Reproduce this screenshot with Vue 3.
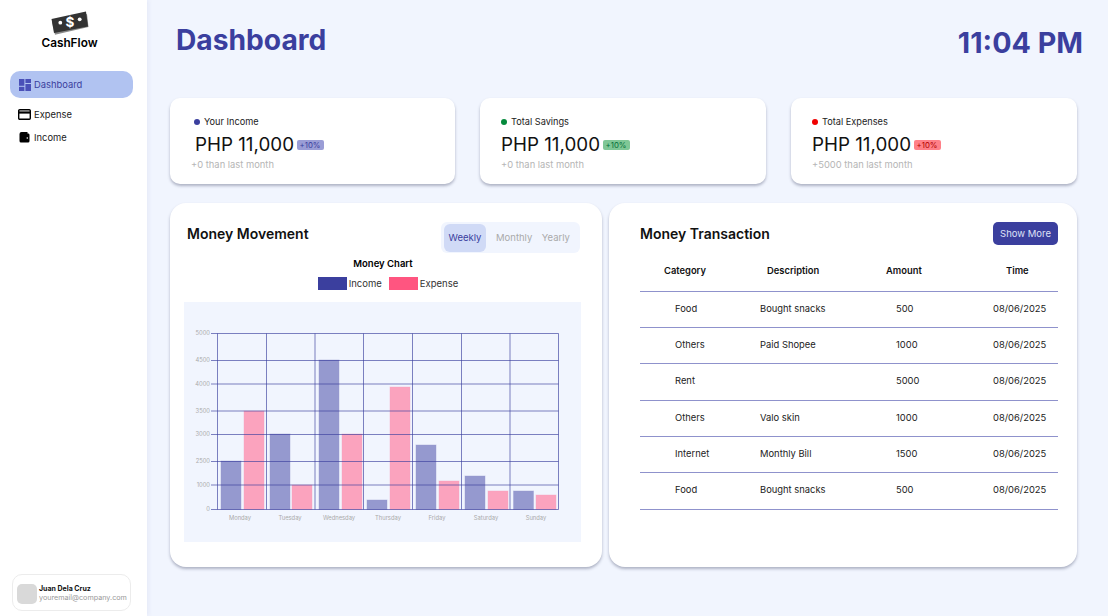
<script setup>
const nav = [
  { label: 'Dashboard', icon: 'dash', active: true },
  { label: 'Expense', icon: 'card' },
  { label: 'Income', icon: 'wallet' }
]

const stats = [
  { title: 'Your Income', tone: 'blue', note: '+0 than last month', inset: true },
  { title: 'Total Savings', tone: 'green', note: '+0 than last month' },
  { title: 'Total Expenses', tone: 'red', note: '+5000 than last month' }
]

const rows = [
  { category: 'Food', description: 'Bought snacks', amount: 500 },
  { category: 'Others', description: 'Paid Shopee', amount: 1000 },
  { category: 'Rent', description: '', amount: 5000 },
  { category: 'Others', description: 'Valo skin', amount: 1000 },
  { category: 'Internet', description: 'Monthly Bill', amount: 1500 },
  { category: 'Food', description: 'Bought snacks', amount: 500 }
]

// chart coordinates are relative to the grey plot box (184,302)
const gridX = [33.5, 82.5, 131, 179.5, 228.5, 277.5, 326, 374.5]
const ticks = [
  { label: '5000', y: 31.5 },
  { label: '4500', y: 58.5 },
  { label: '4000', y: 82 },
  { label: '3500', y: 109 },
  { label: '3000', y: 132.5 },
  { label: '2500', y: 159.5 },
  { label: '1000', y: 183 },
  { label: '0', y: 207.5 }
]
const days = [
  { name: 'Monday', x: 56, income: [37, 159], expense: [60, 109] },
  { name: 'Tuesday', x: 106, income: [86, 132], expense: [108, 183] },
  { name: 'Wednesday', x: 155, income: [135, 58], expense: [158, 132] },
  { name: 'Thursday', x: 204, income: [183, 198], expense: [206, 85] },
  { name: 'Friday', x: 253, income: [232, 143], expense: [255, 179] },
  { name: 'Saturday', x: 302, income: [281, 174], expense: [304, 189] },
  { name: 'Sunday', x: 352, income: [329.5, 189], expense: [352, 193] }
]
const baseY = 207.5
</script>

<template>
  <div class="page">
    <aside class="sidebar">
      <div class="brand">
        <svg class="logo" width="38" height="24" viewBox="0 0 38 24">
          <path d="M1 11 L36 3 L37.5 16 L4 23.8 Z" fill="#8a8a8a" />
          <path d="M0.5 8 L35 0.5 L37 15.5 L3 22 Z" fill="#333" />
          <circle cx="9.3" cy="11.7" r="1.9" fill="#fff" />
          <circle cx="28.7" cy="8.3" r="1.9" fill="#fff" />
          <text x="19" y="15.5" text-anchor="middle" class="logo-sign">$</text>
        </svg>
        <div class="brand-name">CashFlow</div>
      </div>
      <nav class="nav">
        <div v-for="item in nav" :key="item.label" class="nav-item" :class="{ 'nav-item--active': item.active }">
          <span class="nav-icon">
            <svg v-if="item.icon === 'dash'" width="12" height="12" viewBox="0 0 12 12" fill="#4a50b8">
              <rect x="0" y="0" width="5.4" height="6.8" />
              <rect x="6.4" y="0" width="5.6" height="4" />
              <rect x="0" y="7.8" width="5.4" height="4.2" />
              <rect x="6.4" y="5" width="5.6" height="7" />
            </svg>
            <svg v-else-if="item.icon === 'card'" width="13" height="11" viewBox="0 0 13 11">
              <rect x="0.7" y="0.7" width="11.6" height="9.6" rx="1" fill="#fff" stroke="#000" stroke-width="1.4" />
              <rect x="0.7" y="2.4" width="11.6" height="2.2" fill="#000" />
            </svg>
            <svg v-else width="12" height="12" viewBox="0 0 12 12">
              <path d="M.5 2 Q.5 0 2.5 0 H8.5 V1.5 H9.5 Q10.5 1.5 10.5 3 V9 Q10.5 10.5 9 10.5 H2 Q.5 10.5 .5 9 Z" fill="#000" />
              <circle cx="8.3" cy="6" r="0.8" fill="#fff" />
            </svg>
          </span>
          <span>{{ item.label }}</span>
        </div>
      </nav>
      <div class="user">
        <div class="avatar"></div>
        <div class="user-text">
          <div class="user-name">Juan Dela Cruz</div>
          <div class="user-mail">youremail@company.com</div>
        </div>
      </div>
    </aside>

    <main class="main">
      <header class="header">
        <h1>Dashboard</h1>
        <div class="clock">11:04 PM</div>
      </header>

      <section class="stats">
        <div v-for="stat in stats" :key="stat.title" class="stat" :class="{ 'stat--inset': stat.inset }">
          <div class="stat-title"><i class="dot" :class="`dot--${stat.tone}`"></i>{{ stat.title }}</div>
          <div class="stat-value">PHP 11,000<span class="pill" :class="`pill--${stat.tone}`">+10%</span></div>
          <div class="stat-note">{{ stat.note }}</div>
        </div>
      </section>

      <section class="panels">
        <div class="panel panel--chart">
          <div class="chart-head">
            <h2>Money Movement</h2>
            <div class="tabs">
              <span class="tab tab--active">Weekly</span>
              <span class="tab">Monthly</span>
              <span class="tab">Yearly</span>
            </div>
          </div>
          <div class="chart-title">Money Chart</div>
          <div class="legend">
            <i class="swatch swatch--income"></i><span>Income</span>
            <i class="swatch swatch--expense"></i><span>Expense</span>
          </div>
          <svg class="chart" width="397" height="240" viewBox="0 0 397 240">
            <g v-for="day in days" :key="day.name">
              <rect :x="day.income[0]" :y="day.income[1]" width="20" :height="baseY - day.income[1]" class="bar-income" />
              <rect :x="day.expense[0]" :y="day.expense[1]" width="20" :height="baseY - day.expense[1]" class="bar-expense" />
              <text :x="day.x" y="218" text-anchor="middle" class="axis">{{ day.name }}</text>
            </g>
            <g v-for="tick in ticks" :key="tick.label">
              <line x1="27" :x2="374.5" :y1="tick.y" :y2="tick.y" class="grid" />
              <text x="26" :y="tick.y + 1.8" text-anchor="end" class="axis">{{ tick.label }}</text>
            </g>
            <line v-for="x in gridX" :key="x" :x1="x" :x2="x" y1="31.5" y2="207.5" class="grid" />
          </svg>
        </div>

        <div class="panel panel--table">
          <div class="table-head">
            <h2>Money Transaction</h2>
            <button class="more">Show More</button>
          </div>
          <div class="row row--head">
            <span class="c1">Category</span>
            <span class="c2">Description</span>
            <span class="c3">Amount</span>
            <span class="c4">Time</span>
          </div>
          <div v-for="(row, i) in rows" :key="i" class="row">
            <span class="c1">{{ row.category }}</span>
            <span class="c2">{{ row.description }}</span>
            <span class="c3">{{ row.amount }}</span>
            <span class="c4">08/06/2025</span>
          </div>
        </div>
      </section>
    </main>
  </div>
</template>

<style>
html, body {
  margin: 0;
  background: #f1f5fe;
}
</style>

<style scoped>
.page {
  display: flex;
  width: 1108px;
  height: 616px;
  overflow: hidden;
  background: #f1f5fe;
  font-family: Inter, "Liberation Sans", sans-serif;
  color: #111;
}

.sidebar {
  width: 147px;
  flex: none;
  box-sizing: border-box;
  padding: 11px 10px 5px;
  display: flex;
  flex-direction: column;
  background: #fff;
  box-shadow: 2px 0 4px rgba(60, 64, 158, 0.06);
}
.brand {
  display: flex;
  flex-direction: column;
  align-items: center;
  width: 119px;
}
.logo {
  display: block;
}
.logo-sign {
  font: 700 13.5px Inter, sans-serif;
  fill: #fff;
}
.brand-name {
  margin-top: 1px;
  font-size: 11.8px;
  font-weight: 600;
  line-height: 15px;
  color: #000;
}
.nav {
  margin-top: 20px;
  display: flex;
  flex-direction: column;
  font-size: 9.4px;
}
.nav-item {
  width: 123px;
  box-sizing: border-box;
  display: flex;
  align-items: center;
  gap: 3px;
  padding-left: 8px;
  height: 23px;
  color: #222;
}
.nav-icon {
  width: 13px;
  display: flex;
  justify-content: center;
}
.nav-item--active {
  height: 27px;
  margin-bottom: 5px;
  border-radius: 10px;
  background: #b1c3f1;
  color: #3b3f9e;
}
.user {
  margin-top: auto;
  margin-left: 2px;
  width: 119px;
  height: 37px;
  box-sizing: border-box;
  border: 1px solid #ececec;
  border-radius: 10px;
  display: flex;
  align-items: center;
  padding-left: 4px;
  gap: 2px;
}
.avatar {
  width: 20px;
  height: 20px;
  margin-top: 2px;
  border-radius: 5px;
  background: #d9d9d9;
}
.user-text {
  margin-top: 1px;
}
.user-name {
  font-size: 7px;
  font-weight: 700;
  line-height: 9px;
}
.user-mail {
  font-size: 7.2px;
  line-height: 9px;
  color: #999;
  white-space: nowrap;
}

.main {
  flex: 1;
  min-width: 0;
  box-sizing: border-box;
  padding: 0 31px 0 23px;
}
.header {
  display: flex;
  justify-content: space-between;
  height: 98px;
  box-sizing: border-box;
  padding: 23px 0 0 6px;
}
.header h1 {
  margin: 0;
  font-size: 28.2px;
  line-height: 34px;
  font-weight: 700;
  color: #3b3f9e;
}
.clock {
  margin-right: -6px;
  padding-top: 3px;
  font-size: 28.7px;
  line-height: 34px;
  font-weight: 700;
  color: #3b3f9e;
}

.stats {
  display: grid;
  grid-template-columns: 285px 286px 286px;
  gap: 25px;
}
.stat {
  height: 86px;
  box-sizing: border-box;
  padding: 16px 21px;
  background: #fff;
  border-radius: 10px;
  box-shadow: 0 2px 3px rgba(50, 55, 90, 0.35);
}
.stat--inset .stat-title,
.stat--inset .stat-value {
  margin-left: 3px;
}
.stat--inset .stat-value {
  margin-left: 4px;
}
.stat-title {
  display: flex;
  align-items: center;
  gap: 4px;
  font-size: 9.2px;
  line-height: 16px;
  color: #222;
}
.dot {
  width: 6px;
  height: 6px;
  border-radius: 50%;
}
.dot--blue { background: #3b3f9e; }
.dot--green { background: #058a3c; }
.dot--red { background: #f00000; }
.stat-value {
  display: flex;
  align-items: center;
  margin-top: 2.5px;
  font-size: 18.8px;
  line-height: 24px;
  color: #111;
}
.pill {
  margin-left: 2.5px;
  margin-top: 1px;
  width: 27px;
  height: 10px;
  text-align: center;
  border-radius: 2px;
  font-size: 7.8px;
  line-height: 11px;
}
.pill--blue { background: #9a9dd6; color: #3b3f9e; }
.pill--green { background: #7fc796; color: #05703a; }
.pill--red { background: #ff8088; color: #b00000; }
.stat-note {
  margin-top: 1px;
  font-size: 9.4px;
  line-height: 14px;
  color: #b5b5b5;
}

.panels {
  display: flex;
  gap: 7px;
  margin-top: 19px;
}
.panel {
  height: 364px;
  box-sizing: border-box;
  background: #fff;
  border-radius: 16px;
  box-shadow: 0 2px 3px rgba(50, 55, 90, 0.35);
}
.panel--chart {
  width: 432px;
  padding: 18px 14px;
}
.panel--table {
  flex: 1;
  padding: 19px 19px 0 31px;
}
h2 {
  margin: 0;
  font-size: 14px;
  font-weight: 600;
  color: #111;
}
.chart-head {
  display: flex;
  justify-content: space-between;
  align-items: flex-start;
  padding-left: 3px;
  height: 31px;
}
.chart-head h2 {
  margin-top: 3.5px;
}
.tabs {
  margin: 1px 8px 0 0;
  width: 139px;
  height: 31px;
  box-sizing: border-box;
  padding: 0 3px;
  display: flex;
  align-items: center;
  background: #f1f5fe;
  border-radius: 6px;
  font-size: 9.5px;
  color: #aaa;
}
.tab {
  flex: none;
  padding-right: 9.5px;
}
.tab--active {
  width: 42px;
  height: 28px;
  box-sizing: border-box;
  padding: 0;
  margin-right: 10px;
  display: flex;
  align-items: center;
  justify-content: center;
  border-radius: 6px;
  background: #d0daf6;
  color: #3b3f9e;
}
.chart-title {
  margin-top: 5px;
  text-align: center;
  font-size: 9.5px;
  font-weight: 600;
  line-height: 14px;
  padding-right: 6px;
  color: #000;
}
.legend {
  height: 17px;
  margin-top: 4px;
  display: flex;
  justify-content: center;
  align-items: center;
  gap: 2px;
  font-size: 9.5px;
  padding-left: 4px;
  color: #333;
}
.swatch {
  width: 29px;
  height: 13px;
}
.swatch--income { background: #3b3f9e; }
.swatch--expense { background: #ff5580; margin-left: 5px; }
.chart {
  display: block;
  margin-top: 10px;
  background: #f1f5fe;
}
.grid {
  stroke: rgba(59, 63, 158, 0.65);
  stroke-width: 1;
}
.axis {
  font: 5.8px Inter, sans-serif;
  fill: #aaa;
}
.bar-income {
  fill: #9599cf;
  stroke: rgba(149, 153, 207, 0.4);
}
.bar-expense {
  fill: #fba3be;
  stroke: rgba(251, 163, 190, 0.4);
}

.table-head {
  display: flex;
  justify-content: space-between;
  align-items: center;
  height: 23px;
  margin-bottom: 6px;
}
.more {
  width: 65px;
  height: 23px;
  padding: 0;
  border: 0;
  border-radius: 5px;
  background: #3b3f9e;
  color: #dfe2f8;
  font: 9.5px Inter, sans-serif;
}
.row {
  display: grid;
  grid-template-columns: 120px 120px 113px 1fr;
  height: 36.35px;
  align-items: center;
  box-sizing: border-box;
  padding-bottom: 2px;
  border-bottom: 1px solid #8f92cc;
  font-size: 9.4px;
  color: #222;
}
.c1 { padding-left: 35px; }
.c3 { padding-left: 16px; }
.row--head {
  height: 40.5px;
  padding-bottom: 1px;
  font-weight: 600;
  color: #111;
}
.row--head .c1 { padding-left: 24px; }
.row--head .c2 { padding-left: 7px; }
.row--head .c3 { padding-left: 6px; }
.row--head .c4 { padding-left: 13px; }
</style>
